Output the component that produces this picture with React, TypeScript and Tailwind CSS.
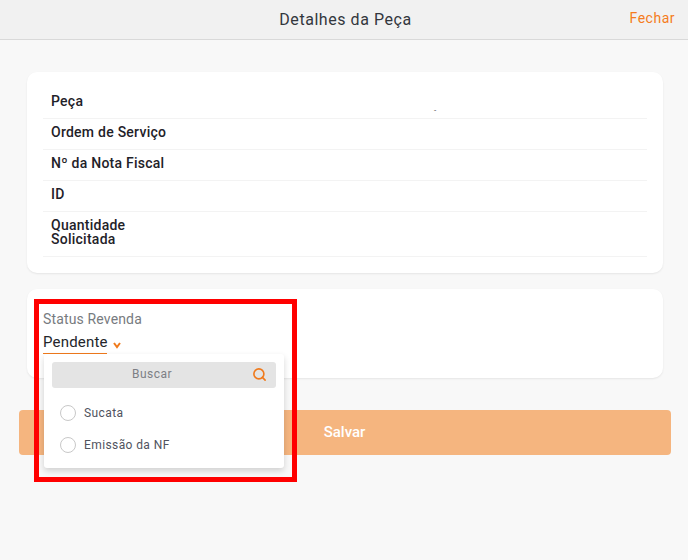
import React from 'react';
import { Search } from 'lucide-react';

const rows = [
  { label: 'Peça', value: '-' },
  { label: 'Ordem de Serviço', value: '' },
  { label: 'Nº da Nota Fiscal', value: '' },
  { label: 'ID', value: '' },
  { label: 'Quantidade Solicitada', value: '' },
];

const options = ['Sucata', 'Emissão da NF'];

export default function App() {
  return (
    <div className="relative h-[560px] w-[688px] overflow-hidden bg-[#f8f8f8] font-['Roboto',sans-serif]">
      <header className="relative flex h-10 items-center justify-center border-b border-[#d9d9d9] bg-[#f1f1f1]">
        <h1 className="ml-[3px] text-base font-normal tracking-[0.55px] text-[#33373d]">Detalhes da Peça</h1>
        <button className="absolute right-[13px] top-[8px] text-sm tracking-[0.5px] text-[#f57c20]">Fechar</button>
      </header>

      <main className="flex flex-col pt-8">
        <section className="ml-[27px] mr-[25px] rounded-[10px] bg-white px-4 pb-4 pt-4 shadow-[0_1px_2px_rgba(0,0,0,0.08)]">
          {rows.map((row) => (
            <div key={row.label} className="flex border-b border-[#f3f3f3] px-2 pb-[10px] pt-[6px]">
              <div className="w-[120px] text-sm leading-[14px] font-medium tracking-[0.25px] text-[#1f2229]">
                {row.label}
              </div>
              <div className="ml-[263px] h-[14px] pt-[10px] text-[8px] leading-[14px] text-[#444]">{row.value}</div>
            </div>
          ))}
        </section>

        <section className="relative ml-[27px] mr-[25px] mt-4 h-[89px] rounded-[10px] bg-white px-4 pt-[22px] shadow-[0_1px_2px_rgba(0,0,0,0.08)]">
          <div className="text-sm leading-4 tracking-[0.15px] text-[#777b80]">Status Revenda</div>
          <div className="mt-[6px] flex items-start">
            <div className="w-16 border-b border-[#f07a1c] pb-[2px] text-[15px] leading-[18px] tracking-[0.2px] text-[#23262b]">
              Pendente
            </div>
            <svg className="ml-[6px] mt-[9px]" width="8" height="7" viewBox="0 0 8 7" fill="none">
              <path d="M1 1 L4 5 L7 1" stroke="#f07a1c" strokeWidth="2" />
            </svg>
          </div>

          <div className="absolute left-[17px] top-[65px] z-10 h-[114px] w-[240px] rounded-[3px] bg-white px-2 pt-2 shadow-[0_3px_6px_rgba(0,0,0,0.16)]">
            <div className="relative flex h-[26px] items-center justify-center rounded-[3px] bg-[#e4e4e4] text-[12px] tracking-[0.5px] text-[#7d7f84]">
              <span className="mr-[24px] mb-[2px]">Buscar</span>
              <Search className="absolute right-[9px] top-[5px] text-[#f07a1c]" size={15} strokeWidth={2.6} />
            </div>
            <div className="mt-[9px] flex flex-col">
              {options.map((option) => (
                <label key={option} className="flex h-8 items-center pl-2 text-[12px] tracking-[0.4px] text-[#50535e]">
                  <span className="mr-[8px] h-4 w-4 rounded-full border border-[#c8c8c8] bg-white" />
                  {option}
                </label>
              ))}
            </div>
          </div>
        </section>

        <button className="ml-[19px] mr-[17px] mt-8 h-[45px] rounded-[4px] bg-[#f5b57f] pr-[1px] text-[15px] font-medium text-white">
          Salvar
        </button>
      </main>

      <div className="pointer-events-none absolute left-[34px] top-[299px] z-20 h-[183px] w-[263px] border-[5px] border-[#ff0000]" />
    </div>
  );
}
